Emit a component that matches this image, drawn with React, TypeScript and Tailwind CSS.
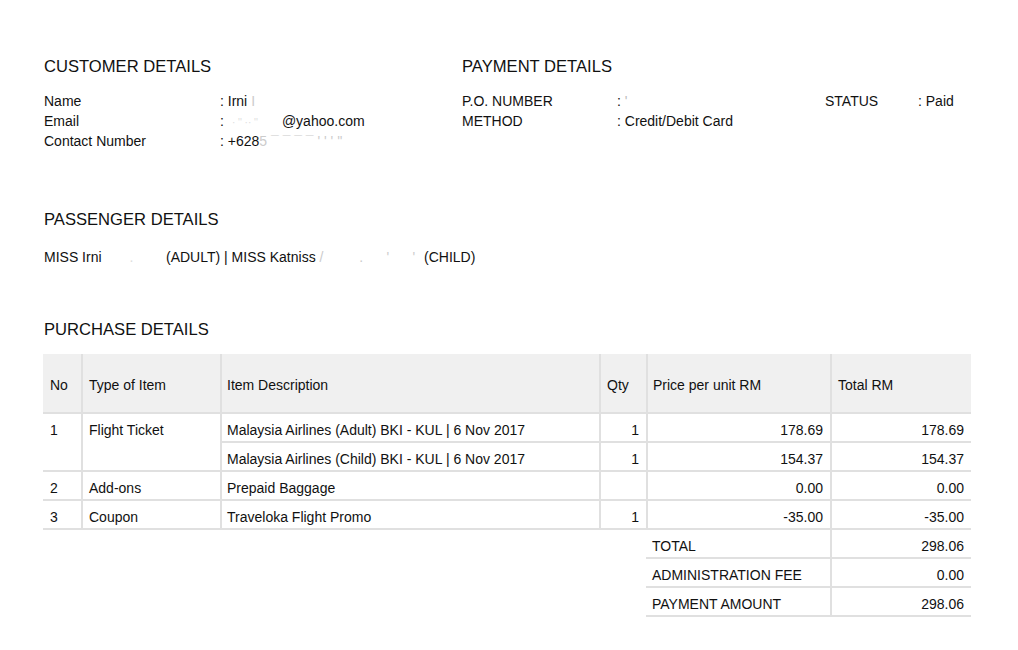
const font = { fontFamily: '"Liberation Sans", Arial, sans-serif' };

const items = [
  { no: "1", type: "Flight Ticket", desc: "Malaysia Airlines (Adult) BKI - KUL | 6 Nov 2017", qty: "1", price: "178.69", total: "178.69", span: 2 },
  { no: "", type: "", desc: "Malaysia Airlines (Child) BKI - KUL | 6 Nov 2017", qty: "1", price: "154.37", total: "154.37", span: 0 },
  { no: "2", type: "Add-ons", desc: "Prepaid Baggage", qty: "", price: "0.00", total: "0.00", span: 1 },
  { no: "3", type: "Coupon", desc: "Traveloka Flight Promo", qty: "1", price: "-35.00", total: "-35.00", span: 1 },
];

const totals = [
  ["TOTAL", "298.06"],
  ["ADMINISTRATION FEE", "0.00"],
  ["PAYMENT AMOUNT", "298.06"],
];

function Heading({ children }: { children: React.ReactNode }) {
  return <h2 className="text-[16.6px] leading-[20px] text-[#111]">{children}</h2>;
}

export default function App() {
  const line = "border-[#e0e0e0]";
  return (
    <div style={font} className="w-[1018px] h-[650px] bg-white text-[#111] text-[14px] pt-[57px] pl-[44px] overflow-hidden">
      {/* Customer + payment */}
      <div className="flex">
        <div className="w-[418px]">
          <Heading>CUSTOMER DETAILS</Heading>
          <div className="mt-[15px] leading-[19.5px]">
            <div className="flex"><span className="w-[176px]">Name</span><span>: Irni <span className="text-[#ccc]">I</span></span></div>
            <div className="flex"><span className="w-[176px]">Email</span><span>:<span className="inline-block w-[58px] text-[#ddd] text-[10px] pl-2">· '' ·· ''</span>@yahoo.com</span></div>
            <div className="flex"><span className="w-[176px]">Contact Number</span><span>: +628<span className="text-[#ccc]">5 ¯ ¯ ¯ ¯ ' ' ' ''</span></span></div>
          </div>
        </div>
        <div>
          <Heading>PAYMENT DETAILS</Heading>
          <div className="mt-[15px] leading-[19.5px]">
            <div className="flex">
              <span className="w-[155px]">P.O. NUMBER</span>
              <span className="w-[208px]">: <span className="text-[#bbb]">'</span></span>
              <span className="w-[93px]">STATUS</span>
              <span>: Paid</span>
            </div>
            <div className="flex"><span className="w-[155px]">METHOD</span><span>: Credit/Debit Card</span></div>
          </div>
        </div>
      </div>

      {/* Passengers */}
      <div className="mt-[58px]">
        <Heading>PASSENGER DETAILS</Heading>
        <div className="mt-[18px] leading-[19.5px] flex">
          <span className="w-[122px]">MISS Irni <span className="text-[#ddd] pl-6">.</span></span>
          <span className="w-[258px]">(ADULT) | MISS Katniss <span className="text-[#ccc]">/ <span className="pl-8">. &nbsp;&nbsp;&nbsp;&nbsp; ' &nbsp;&nbsp;&nbsp;&nbsp; '</span></span></span>
          <span>(CHILD)</span>
        </div>
      </div>

      {/* Purchase */}
      <div className="mt-[53px]">
        <Heading>PURCHASE DETAILS</Heading>
        <table className="mt-[14px] -ml-[1px] w-[928px] table-fixed border-separate border-spacing-0 text-[14px] leading-[16px]">
          <colgroup>
            <col className="w-[38px]" />
            <col className="w-[139px]" />
            <col className="w-[379px]" />
            <col className="w-[47px]" />
            <col className="w-[184px]" />
            <col className="w-[141px]" />
          </colgroup>
          <thead>
            <tr className="bg-[#f0f0f0] h-[60px] text-left">
              <th className={`font-normal pt-[4px] pl-[7px] border-b-2 ${line}`}>No</th>
              <th className={`font-normal pt-[4px] pl-[6px] border-b-2 border-l-2 ${line}`}>Type of Item</th>
              <th className={`font-normal pt-[4px] pl-[5px] border-b-2 border-l-2 ${line}`}>Item Description</th>
              <th className={`font-normal pt-[4px] pl-[6px] border-b-2 border-l-2 ${line}`}>Qty</th>
              <th className={`font-normal pt-[4px] pl-[5px] border-b-2 border-l-2 ${line}`}>Price per unit RM</th>
              <th className={`font-normal pt-[4px] pl-[6px] border-b-2 border-l-2 ${line}`}>Total RM</th>
            </tr>
          </thead>
          <tbody>
            {items.map((it, i) => (
              <tr key={i} className="h-[29px]">
                {it.span > 0 && (
                  <>
                    <td rowSpan={it.span} className={`align-top pt-[8px] pl-[7px] border-b-2 ${line}`}>{it.no}</td>
                    <td rowSpan={it.span} className={`align-top pt-[8px] pl-[6px] border-b-2 border-l-2 ${line}`}>{it.type}</td>
                  </>
                )}
                <td className={`pt-[4px] pl-[5px] border-b-2 border-l-2 ${line}`}>{it.desc}</td>
                <td className={`pt-[4px] text-right pr-[7px] border-b-2 border-l-2 ${line}`}>{it.qty}</td>
                <td className={`pt-[4px] text-right pr-[7px] border-b-2 border-l-2 ${line}`}>{it.price}</td>
                <td className={`pt-[4px] text-right pr-[7px] border-b-2 border-l-2 ${line}`}>{it.total}</td>
              </tr>
            ))}
            {totals.map(([label, value]) => (
              <tr key={label} className="h-[29px]">
                <td colSpan={4}></td>
                <td className={`pt-[4px] pl-[6px] border-b-2 ${line}`}>{label}</td>
                <td className={`pt-[4px] text-right pr-[7px] border-b-2 border-l-2 ${line}`}>{value}</td>
              </tr>
            ))}
          </tbody>
        </table>
      </div>
    </div>
  );
}
